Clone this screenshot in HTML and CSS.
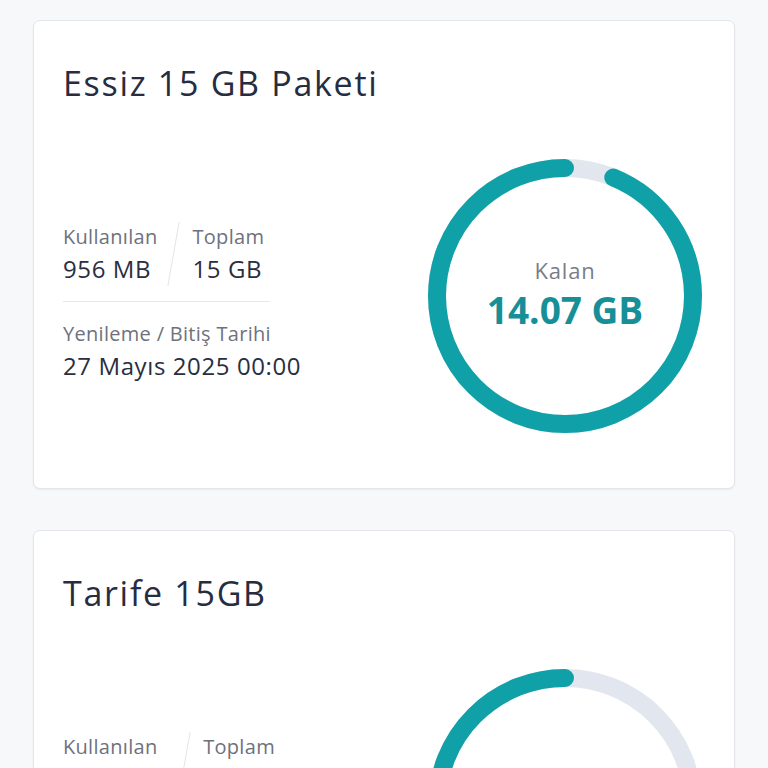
FILE: index.html
```html
<!DOCTYPE html>
<html lang="tr">
<head>
<meta charset="utf-8">
<link rel="stylesheet" href="styles.css">
</head>
<body>
<div class="page">
  <section class="card">
    <h2 class="title">Essiz 15 GB Paketi</h2>
    <div class="body">
      <div class="info">
        <div class="usage">
          <div class="col">
            <div class="label">Kullanılan</div>
            <div class="value">956 MB</div>
          </div>
          <div class="slash"></div>
          <div class="col">
            <div class="label">Toplam</div>
            <div class="value">15 GB</div>
          </div>
        </div>
        <div class="sep"></div>
        <div class="label">Yenileme / Bitiş Tarihi</div>
        <div class="value">27 Mayıs 2025 00:00</div>
      </div>
      <div class="ring">
        <svg viewBox="-137 -137 274 274" width="274" height="274">
          <circle class="track" r="128"></circle>
          <circle class="bar" r="128" transform="rotate(-90) scale(1,-1)" stroke-dasharray="754.4 804.25"></circle>
        </svg>
        <div class="center">
          <div class="kalan">Kalan</div>
          <div class="remain">14.07 GB</div>
        </div>
      </div>
    </div>
  </section>
  <section class="card">
    <h2 class="title">Tarife 15GB</h2>
    <div class="body">
      <div class="info">
        <div class="usage">
          <div class="col">
            <div class="label">Kullanılan</div>
            <div class="value">10.92 GB</div>
          </div>
          <div class="slash"></div>
          <div class="col">
            <div class="label">Toplam</div>
            <div class="value">15 GB</div>
          </div>
        </div>
        <div class="sep"></div>
        <div class="label">Yenileme / Bitiş Tarihi</div>
        <div class="value">27 Mayıs 2025 00:00</div>
      </div>
      <div class="ring">
        <svg viewBox="-137 -137 274 274" width="274" height="274">
          <circle class="track" r="128"></circle>
          <circle class="bar" r="128" transform="rotate(-90) scale(1,-1)" stroke-dasharray="218.8 804.25"></circle>
        </svg>
        <div class="center">
          <div class="kalan">Kalan</div>
          <div class="remain">4.08 GB</div>
        </div>
      </div>
    </div>
  </section>
</div>
</body>
</html>
```
FILE: styles.css
```css
html, body {
  margin: 0;
  padding: 0;
  background: #f7f8fa;
}
body {
  font-family: "Open Sans", "Lato", sans-serif;
  color: #262b3d;
}
.page {
  padding: 20px 33px;
  display: flex;
  flex-direction: column;
  gap: 41px;
}
.card {
  background: #fff;
  border: 1px solid #e4e6eb;
  border-radius: 7px;
  box-shadow: 0 1px 2px rgba(30, 40, 60, 0.07);
  padding: 42px 32px 55px 29px;
}
.title {
  margin: 0;
  font-size: 34px;
  font-weight: 500;
  line-height: 40px;
  letter-spacing: 1.7px;
  color: #272c40;
}
.body {
  display: flex;
  align-items: center;
  justify-content: space-between;
  margin-top: 56px;
}
.info {
  display: flex;
  flex-direction: column;
  margin-top: 12px;
}
.usage {
  display: flex;
  align-items: stretch;
}
.slash {
  width: 1px;
  background: #e2e4e9;
  transform: skewX(-10deg);
  margin: 0 18px 0 16px;
}
.label {
  font-size: 20px;
  line-height: 30px;
  letter-spacing: 0.3px;
  color: #6e717c;
}
.value {
  font-size: 24px;
  line-height: 34px;
  letter-spacing: 0.6px;
  color: #2a2e3f;
}
.sep {
  width: 207px;
  height: 1px;
  background: #e6e8ec;
  margin: 15px 0 17px;
}
.ring {
  position: relative;
  width: 274px;
  height: 274px;
}
.ring svg {
  display: block;
}
.track {
  fill: none;
  stroke: #e2e6ee;
  stroke-width: 18;
}
.bar {
  fill: none;
  stroke: #10a0a8;
  stroke-width: 18;
  stroke-linecap: round;
}
.center {
  position: absolute;
  inset: 0;
  display: flex;
  flex-direction: column;
  align-items: center;
  justify-content: center;
}
.kalan {
  font-size: 22px;
  line-height: 30px;
  letter-spacing: 0.8px;
  color: #7a7d87;
  margin-top: -4px;
}
.remain {
  font-size: 37px;
  font-weight: 700;
  line-height: 46px;
  color: #168f97;
  margin-top: 2px;
}
```
